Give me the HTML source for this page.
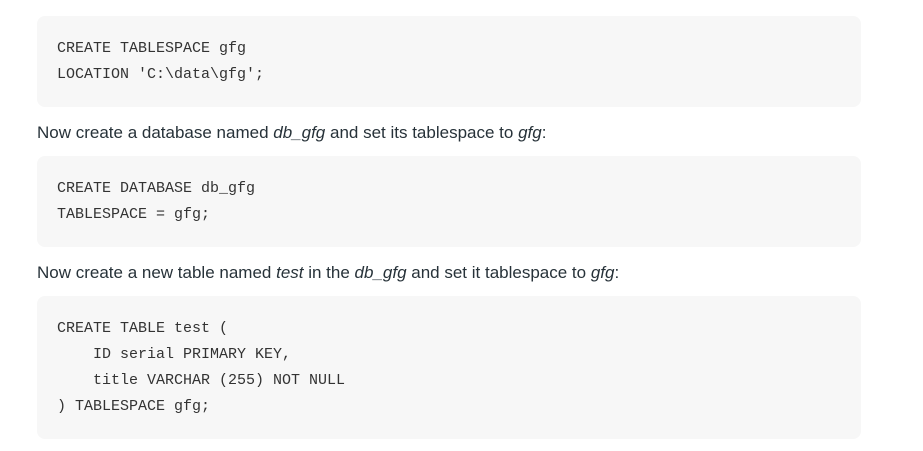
<!DOCTYPE html><html><head><style>
body{margin:0;background:#fff;width:923px;height:451px;overflow:hidden;font-family:"Liberation Sans",sans-serif;}
.box{position:absolute;left:37px;width:824px;background:#f7f7f7;border-radius:8px;}
pre{margin:0;position:absolute;left:20px;font-family:"Liberation Mono",monospace;font-size:15px;line-height:26px;color:#333;}
p{position:absolute;left:37px;margin:0;font-size:17px;color:#273239;line-height:22px;letter-spacing:0px}
</style></head><body>
<div class="box" style="top:16px;height:91px"><pre style="top:20px">CREATE TABLESPACE gfg
LOCATION 'C:\data\gfg';</pre></div>
<p style="top:122px">Now create a database named <i>db_gfg</i> and set its tablespace to <i>gfg</i>:</p>
<div class="box" style="top:156px;height:91px"><pre style="top:20px">CREATE DATABASE db_gfg
TABLESPACE = gfg;</pre></div>
<p style="top:262px">Now create a new table named <i>test</i> in the <i>db_gfg</i> and set it tablespace to <i>gfg</i>:</p>
<div class="box" style="top:296px;height:143px"><pre style="top:20px">CREATE TABLE test (
    ID serial PRIMARY KEY,
    title VARCHAR (255) NOT NULL
) TABLESPACE gfg;</pre></div>
</body></html>
